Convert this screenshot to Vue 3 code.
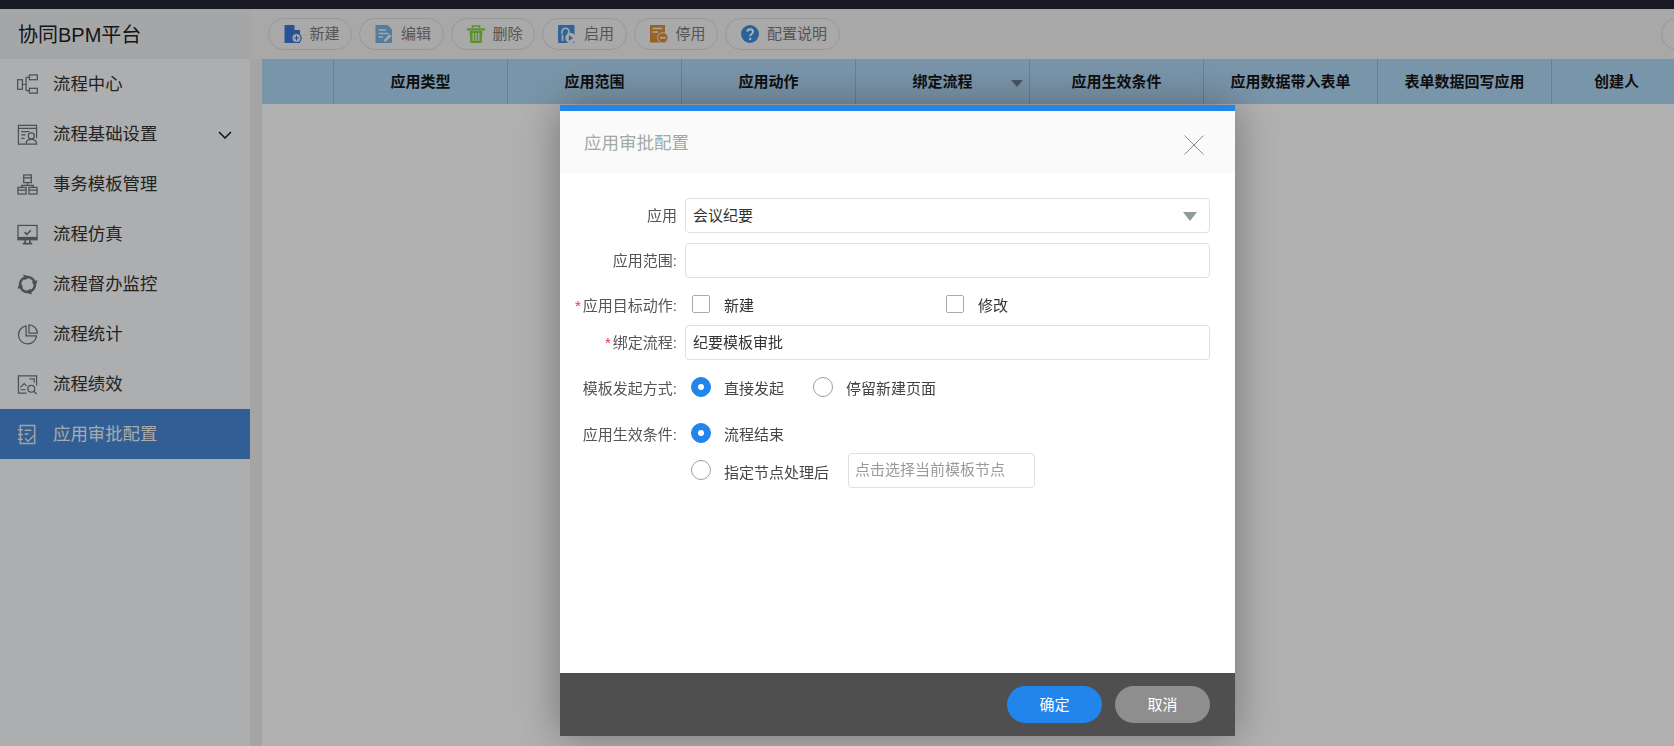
<template>
  <div class="page">
    <div class="topbar"></div>
    <div class="layout">
      <aside class="side">
        <div class="brand"><span>协同BPM平台</span></div>
        <div v-for="m in menus" :key="m.text" class="menu" :class="{ active: m.active }">
          <svg class="menu-ico" viewBox="0 0 22 22" fill="none" stroke="currentColor" stroke-width="1.3">
            <template v-if="m.icon === 'flow'">
              <rect x="0.7" y="6" width="5" height="10" /><rect x="13" y="1" width="8.3" height="5" /><rect x="13" y="15" width="8.3" height="5" />
              <path d="M5.7 11H9.5M9.5 3.5V17.5M9.5 3.5H13M9.5 17.5H13" />
            </template>
            <template v-else-if="m.icon === 'base'">
              <path d="M9 21H1.5V1.5H20.5V15" /><path d="M1.5 4.5H20.5M4.5 8H13M4.5 11.5H9M4.5 15H8" />
              <circle cx="15" cy="12.5" r="3.2" /><path d="M9.5 21C9.5 17.5 12 16 15 16S20.5 17.5 20.5 21Z" />
            </template>
            <template v-else-if="m.icon === 'tree'">
              <rect x="7" y="1" width="8" height="8" /><path d="M7 4H15" /><path d="M11 9V12M5 15V12H17V15" />
              <rect x="1" y="14" width="8.5" height="7" /><rect x="12.5" y="14" width="8.5" height="7" /><path d="M1 17H9.5M12.5 17H21" />
            </template>
            <template v-else-if="m.icon === 'screen'">
              <rect x="1" y="1.5" width="20" height="15" /><path d="M1 15H21" stroke-width="3" /><path d="M8 8.5L10.3 10.8L14.5 6.5" stroke-width="1.6" /><path d="M8.5 17V20M13.5 17V20M6 20.5H16" stroke-width="1.8" />
            </template>
            <template v-else-if="m.icon === 'ring'">
              <circle cx="11" cy="11" r="7.8" stroke-width="2.6" />
              <path d="M6.5 0.5L14 3L8 6.5ZM21.5 6.5L19 14L15.5 8ZM15.5 21.5L8 19L14 15.5ZM0.5 15.5L3 8L6.5 14Z" fill="currentColor" stroke="none" />
            </template>
            <template v-else-if="m.icon === 'pie'">
              <path d="M9.5 2A9.5 9.5 0 1 0 20.5 12.5H9.5Z" /><path d="M12.5 0.8A9 9 0 0 1 21.3 9.5H12.5Z" />
            </template>
            <template v-else-if="m.icon === 'perf'">
              <path d="M10 20H1.5V2H20.5V12" /><path d="M3.5 14L7.5 10L10 12.5M3.5 16.5H9M13 5H18V9" />
              <circle cx="15" cy="15.5" r="3.6" /><path d="M17.5 18L20.5 21" />
            </template>
            <template v-else>
              <path d="M3.5 1.5H18.5V20.5H3.5Z" stroke-width="1.6" /><path d="M1 6H6M1 11H6M1 16H6M8 6.5H15M8 10.5H12M8.5 15L11.5 18L19 11" stroke-width="1.5" />
            </template>
          </svg>
          <span class="menu-text">{{ m.text }}</span>
          <svg v-if="m.arrow" class="chev" viewBox="0 0 14 8" fill="none" stroke="#1c1c1c" stroke-width="1.5"><path d="M1 1L7 7L13 1" /></svg>
        </div>
      </aside>

      <main class="main">
        <div class="toolbar">
          <button v-for="b in buttons" :key="b.text" class="tool">
            <svg class="tool-ico" viewBox="0 0 18 18">
              <template v-if="b.icon === 'add'">
                <path d="M0.5 0H10L16 5.5V18H0.5Z" fill="#3a78d8" /><path d="M10.5 0L16 5H10.5Z" fill="#f3f3f3" />
                <circle cx="12.5" cy="13" r="4.6" fill="#f3f3f3" stroke="#3a78d8" stroke-width="1.2" /><path d="M12.5 10.6V15.4M10.1 13H14.9" stroke="#3a78d8" stroke-width="1.2" />
              </template>
              <template v-else-if="b.icon === 'edit'">
                <path d="M0.5 0H12.5L17 4.5V18H0.5Z" fill="#79b6e6" /><path d="M3.5 5H11M3.5 8.5H13.5M3.5 12H8" stroke="#f3f3f3" stroke-width="1.4" /><path d="M8.5 15.5L14.5 9L16.5 11L10.5 17Z" fill="#f3f3f3" />
              </template>
              <template v-else-if="b.icon === 'del'">
                <path d="M2.5 6H15.5L14.5 18H3.5Z" fill="#86d63a" /><path d="M0 3.3H18V5.5H0Z" fill="#86d63a" /><path d="M5.5 3V1H12.5V3" fill="none" stroke="#86d63a" stroke-width="1.6" />
                <path d="M6.2 8V16M9 8V16M11.8 8V16" stroke="#f3f3f3" stroke-width="1.3" />
              </template>
              <template v-else-if="b.icon === 'on'">
                <rect x="0" y="0" width="16.5" height="18" rx="1" fill="#4790e0" />
                <path d="M4 9C3 5 6 2.5 9 3.5C11.5 4.5 11.5 7 10 8.5" fill="none" stroke="#f3f3f3" stroke-width="1.6" /><path d="M4.5 10V16" stroke="#f3f3f3" stroke-width="1.7" />
                <circle cx="12.5" cy="13" r="5.2" fill="#f3f3f3" /><path d="M10.8 10.2V15.8L15.2 13Z" fill="#4790e0" />
              </template>
              <template v-else-if="b.icon === 'off'">
                <rect x="0" y="0" width="15" height="17.5" fill="#e09038" /><path d="M2.5 3.5H12.5M2.5 7H8" stroke="#f3f3f3" stroke-width="1.5" />
                <circle cx="12.8" cy="12.8" r="5.2" fill="#e09038" stroke="#f3f3f3" /><path d="M10 12.8H15.6" stroke="#f3f3f3" stroke-width="1.6" />
              </template>
              <template v-else>
                <circle cx="9" cy="9" r="9" fill="#3f8ee0" /><path d="M6.3 6.8C6.5 3.4 12 3.5 12 6.8C12 9 9.2 9 9.2 11.2" fill="none" stroke="#fff" stroke-width="1.9" /><circle cx="9.2" cy="14" r="1.2" fill="#fff" />
              </template>
            </svg>
            <span class="tool-text">{{ b.text }}</span>
          </button>
          <button class="tool tool-cut"></button>
        </div>
        <div class="content">
          <div class="thead">
            <div class="th first"></div>
            <div v-for="c in columns" :key="c" class="th">
              {{ c }}
              <i v-if="c === '绑定流程'" class="sort"></i>
            </div>
            <div class="th last">创建人</div>
          </div>
        </div>
      </main>
    </div>

    <div class="mask"></div>

    <section class="modal">
      <header class="m-head">
        <h3>应用审批配置</h3>
        <svg class="m-close" viewBox="0 0 20 20" stroke="#8c8c8c" stroke-width="1"><path d="M0.5 0.5L19.5 19.5M19.5 0.5L0.5 19.5" /></svg>
      </header>
      <div class="m-body">
        <div class="row">
          <label class="lab lift">应用</label>
          <div class="select">会议纪要<i class="caret"></i></div>
        </div>
        <div class="row r2">
          <label class="lab lift">应用范围:</label>
          <input class="ipt" />
        </div>
        <div class="row r3">
          <label class="lab"><em>*</em>应用目标动作:</label>
          <div class="check first-check"><i class="box"></i><span>新建</span></div>
          <div class="check"><i class="box"></i><span>修改</span></div>
        </div>
        <div class="row r4">
          <label class="lab lift"><em>*</em>绑定流程:</label>
          <input class="ipt" value="纪要模板审批" />
        </div>
        <div class="row r5">
          <label class="lab">模板发起方式:</label>
          <div class="radio"><i class="dot on"></i><span>直接发起</span></div>
          <div class="radio second"><i class="dot"></i><span>停留新建页面</span></div>
        </div>
        <div class="row r6">
          <label class="lab">应用生效条件:</label>
          <div class="radio"><i class="dot on"></i><span>流程结束</span></div>
        </div>
        <div class="row r7">
          <label class="lab"></label>
          <div class="radio"><i class="dot up"></i><span>指定节点处理后</span></div>
          <input class="ipt node" placeholder="点击选择当前模板节点" />
        </div>
      </div>
      <footer class="m-foot">
        <button class="btn ok">确定</button>
        <button class="btn cancel">取消</button>
      </footer>
    </section>
  </div>
</template>

<script setup>
const menus = [
  { text: '流程中心', icon: 'flow' },
  { text: '流程基础设置', icon: 'base', arrow: true },
  { text: '事务模板管理', icon: 'tree' },
  { text: '流程仿真', icon: 'screen' },
  { text: '流程督办监控', icon: 'ring' },
  { text: '流程统计', icon: 'pie' },
  { text: '流程绩效', icon: 'perf' },
  { text: '应用审批配置', icon: 'note', active: true },
]

const buttons = [
  { text: '新建', icon: 'add' },
  { text: '编辑', icon: 'edit' },
  { text: '删除', icon: 'del' },
  { text: '启用', icon: 'on' },
  { text: '停用', icon: 'off' },
  { text: '配置说明', icon: 'help' },
]

const columns = ['应用类型', '应用范围', '应用动作', '绑定流程', '应用生效条件', '应用数据带入表单', '表单数据回写应用']
</script>

<style>
html, body { margin: 0; height: 100%; overflow: hidden; }
</style>

<style scoped>
.page{height:746px;display:flex;flex-direction:column;overflow:hidden;background:#fff;font-family:"Liberation Sans","Noto Sans CJK SC",sans-serif;font-size:15px;color:#333}
.topbar{height:9px;background:#262637;flex:none}
.layout{flex:1;display:flex;min-height:0}

.side{width:250px;flex:none;background:#fbfcff}
.brand{height:50px;line-height:52px;padding-left:18px;font-size:20px;color:#222;background:#f0f1f4}
.menu{height:50px;display:flex;align-items:center;padding-left:17px;font-size:17.4px;color:#333;position:relative}
.menu.active{background:#4689d8;color:#f4f6fa}
.menu-text{position:relative;top:-2px}
.menu-ico{width:21px;height:21px;margin-right:15px;color:#6e7379;flex:none}
.menu.active .menu-ico{color:#e8edf3}
.chev{position:absolute;left:218px;top:22px;width:14px;height:8px}

.main{flex:1;min-width:0;display:flex;flex-direction:column}
.toolbar{height:50px;flex:none;display:flex;align-items:center;gap:7px;padding-left:17.5px;background:#f3f3f3;box-sizing:border-box}
.tool{height:32px;padding:0 11.5px 0 15px;display:flex;align-items:center;gap:8px;background:#f5f5f5;border:1px solid #dcdcdc;border-radius:16px;font:inherit;color:#7b7b7b;box-sizing:border-box}
.tool-ico{width:18px;height:18px;flex:none}
.tool-text{position:relative;top:-2px}
.tool-cut{width:60px;flex:none;margin-left:auto;margin-right:-47px}
.content{flex:1;background:#fff;border-left:12px solid #efefef;overflow:hidden}
.thead{display:flex;height:45px;background:#b0d8f5;width:1500px}
.th{width:174px;flex:none;box-sizing:border-box;border-left:1px solid #95b8d8;padding-bottom:2px;display:flex;align-items:center;justify-content:center;font-weight:bold;color:#151515;position:relative}
.th.first{width:71px;border-left:0}
.th.last{width:130px}
.sort{position:absolute;right:6px;top:21px;border:6px solid transparent;border-top:7px solid #6a7b90;border-bottom:0}

.mask{position:fixed;inset:0;background:rgba(0,0,0,.31)}

.modal{position:fixed;left:560px;top:105px;width:675px;height:631px;display:flex;flex-direction:column;background:#fff;border-top:6px solid #2185ec;box-sizing:border-box;box-shadow:0 0 40px rgba(0,0,0,.35)}
.m-head{height:62px;flex:none;display:flex;align-items:center;justify-content:space-between;padding:0 31px 0 24px;background:#fafafa}
.m-head h3{margin:0 0 2px;font-weight:normal;font-size:17.5px;color:#a2a9a4}
.m-close{width:20px;height:20px;margin-top:6px}
.m-body{flex:1;padding-top:25px}
.row{display:flex;align-items:center;min-height:35px}
.r2{margin-top:10px}
.r3{margin-top:17px;min-height:18px;height:18px;line-height:18px}
.r4{margin-top:12px}
.r5{margin-top:17px;min-height:20px;height:20px;line-height:20px}
.r6{margin-top:26px;min-height:20px;height:20px;line-height:20px}
.r7{margin-top:10px;line-height:20px}
.lab{width:117px;margin-right:8px;text-align:right;flex:none;color:#555;position:relative;top:2px}
.lab.lift{padding-bottom:2px;top:0}
.lab em{color:#e8333a;font-style:normal;margin-right:2px}
.select,.ipt{width:525px;height:35px;box-sizing:border-box;border:1px solid #dcdfe6;border-radius:4px;padding:0 7px 2px;background:#fff;font:inherit;color:#333;outline:none}
.select{display:flex;align-items:center;position:relative}
.caret{position:absolute;right:12px;top:13px;border:7px solid transparent;border-top:9px solid #8d9c94;border-bottom:0}
.check{display:flex;align-items:center;gap:14px;width:254px}
.first-check{margin-left:7px}
.check span{position:relative;top:2px}
.box{width:18px;height:18px;box-sizing:border-box;border:1px solid #a9a9a9;border-radius:2px;flex:none}
.radio{display:flex;align-items:center;gap:13px;margin-left:6px}
.radio span{position:relative;top:2px;color:#444}
.radio.second{margin-left:29px}
.dot{width:20px;height:20px;box-sizing:border-box;border:1px solid #9d9d9d;border-radius:50%;flex:none;position:relative;top:0}
.dot.on{background:#2185ec;border-color:#2185ec}
.dot.on::after{content:"";position:absolute;left:6px;top:6px;width:6px;height:6px;border-radius:50%;background:#fff}
.dot.up{top:-1px}
.ipt.node{width:187px;margin-left:19px;padding-left:6px}
.ipt::placeholder{color:#9a9a9a}
.m-foot{height:63px;flex:none;display:flex;align-items:center;justify-content:flex-end;gap:13px;padding-right:25px;background:#4f4f4f}
.btn{width:95px;height:37px;border:0;border-radius:19px;padding:0 0 2px;font:inherit;color:#fff}
.btn.ok{background:#2185ec}
.btn.cancel{background:#8e8e8e}
</style>
